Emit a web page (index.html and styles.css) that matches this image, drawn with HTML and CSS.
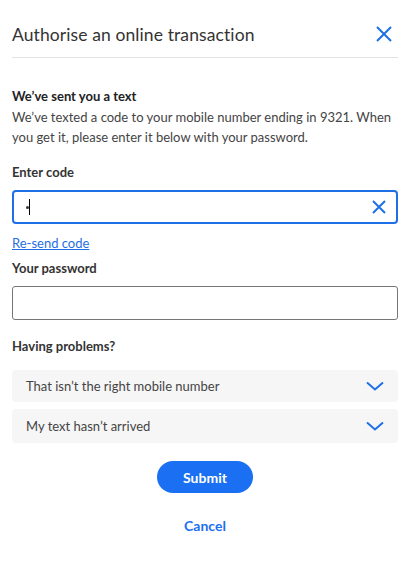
FILE: index.html
```
<!DOCTYPE html>
<html>
<head>
<meta charset="utf-8">
<link rel="stylesheet" href="styles.css">
</head>
<body>
<div class="dialog">
  <header class="head">
    <h1 class="title">Authorise an online transaction</h1>
    <svg class="close" width="16" height="16" viewBox="0 0 16 16"><path d="M1 1L15 15M15 1L1 15" stroke="#1f6fe5" stroke-width="2" fill="none"/></svg>
  </header>
  <div class="body">
    <p class="strong">We’ve sent you a text</p>
    <p class="desc">We’ve texted a code to your mobile number ending in 9321. When you get it, please enter it below with your password.</p>
    <label class="label l-code">Enter code</label>
    <div class="input focus">
      <span class="dot"></span><span class="caret"></span>
      <svg class="clear" width="14" height="14" viewBox="0 0 14 14"><path d="M1 1L13 13M13 1L1 13" stroke="#1f6fe5" stroke-width="2" fill="none"/></svg>
    </div>
    <a class="link" href="#">Re-send code</a>
    <label class="label l-pass">Your password</label>
    <div class="input plain"></div>
    <p class="label l-prob">Having problems?</p>
    <div class="acc">
      <span>That isn’t the right mobile number</span>
      <svg class="chev" width="18" height="10" viewBox="0 0 18 10"><path d="M1 1.5L9 8.5L17 1.5" stroke="#1f6fe5" stroke-width="2" fill="none"/></svg>
    </div>
    <div class="acc">
      <span>My text hasn’t arrived</span>
      <svg class="chev" width="18" height="10" viewBox="0 0 18 10"><path d="M1 1.5L9 8.5L17 1.5" stroke="#1f6fe5" stroke-width="2" fill="none"/></svg>
    </div>
    <div class="actions">
      <button class="submit">Submit</button>
      <a class="cancel" href="#">Cancel</a>
    </div>
  </div>
</div>
</body>
</html>
```
FILE: styles.css
```
* { box-sizing: border-box; }
html, body { margin: 0; padding: 0; background: #fff; }
body { font-family: Lato, "Open Sans", sans-serif; color: #333; }
.dialog { width: 416px; padding: 0 18px 0 12px; }
.head { display: flex; justify-content: space-between; align-items: center; height: 58px; border-bottom: 1px solid #e3e3e3; padding-top: 11px; padding-bottom: 0; }
.title { margin: 0; font-size: 17.5px; font-weight: 400; color: #333; letter-spacing: 0.1px; }
.close { margin-right: 6px; }
.body { padding-top: 29px; }
.strong { margin: 0; font-size: 13px; font-weight: 700; color: #222; line-height: 18px; }
.desc { margin: 2px 0 0; font-size: 13px; line-height: 20px; color: #444; }
.label { display: block; margin: 0; font-size: 13px; font-weight: 700; color: #333; line-height: 18px; }
.l-code { margin-top: 16px; }
.l-pass { margin-top: 7px; }
.l-prob { margin-top: 17px; }
.input { height: 34px; margin-top: 9px; border-radius: 4px; display: flex; align-items: center; position: relative; }
.focus { border: 2px solid #1f6fe5; padding: 0 10px 0 12px; }
.plain { border: 1px solid #767676; border-radius: 3px; margin-top: 9px; }
.dot { width: 3px; height: 3px; border-radius: 50%; background: #333; margin-left: 0; }
.caret { width: 1px; height: 16px; background: #000; margin-left: 0; }
.clear { margin-left: auto; }
.link { display: block; margin-top: 10px; font-size: 13px; color: #1f6fe5; text-decoration: underline; line-height: 18px; }
.acc { height: 32px; margin-top: 7px; background: #f6f6f6; border-radius: 4px; display: flex; align-items: center; justify-content: space-between; padding: 0 14px 0 14px; font-size: 13px; color: #444; }
.l-prob + .acc { margin-top: 15px; }
.acc + .acc { height: 34px; }
.actions { display: flex; flex-direction: column; align-items: center; margin-top: 18px; }
.submit { width: 96px; height: 32px; border: 0; border-radius: 16px; background: #1a6ff2; color: #fff; font-family: Lato, sans-serif; font-weight: 700; font-size: 14px; }
.cancel { margin-top: 24px; font-size: 14px; font-weight: 700; color: #1a6ff2; text-decoration: none; }
```
